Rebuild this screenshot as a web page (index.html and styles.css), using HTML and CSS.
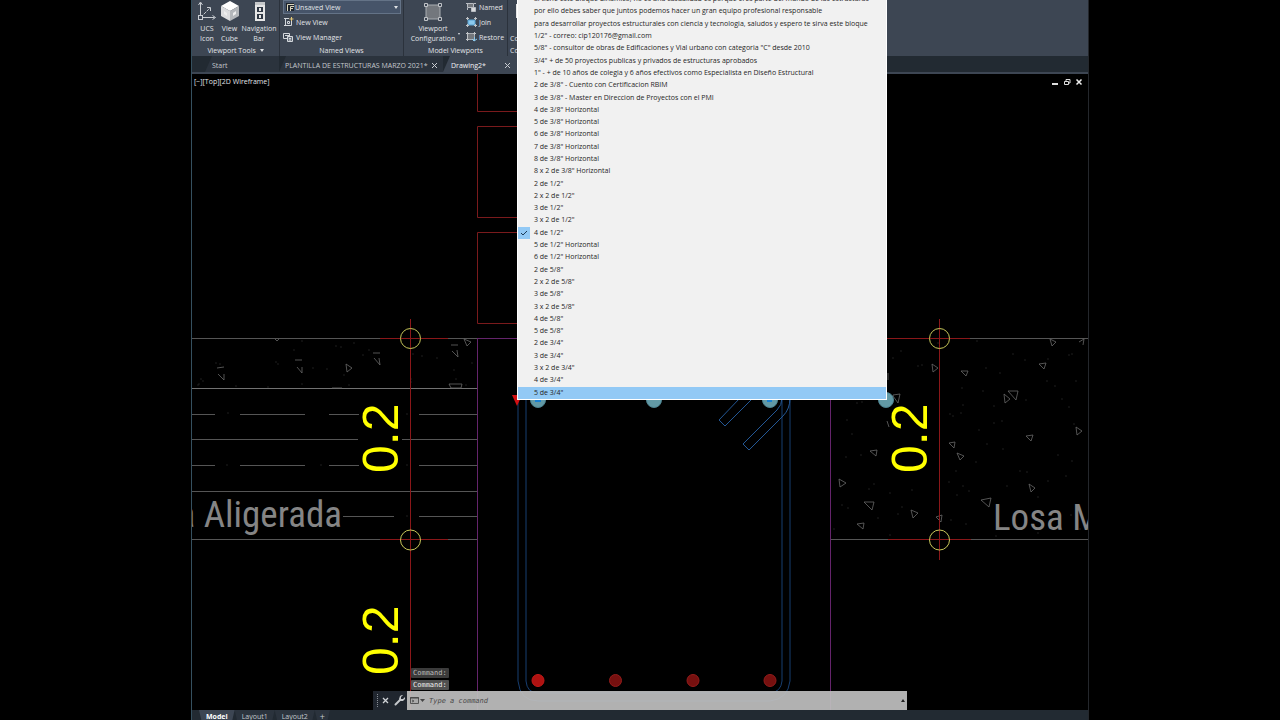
FILE: index.html
```html
<!DOCTYPE html>
<html lang="es">
<head>
<meta charset="utf-8">
<title>Drawing2</title>
<link rel="stylesheet" href="styles.css">
</head>
<body>
<div class="app">
  <header class="ribbon">
    <section class="panel panel-tools">
      <div class="panel-body big-tools">
        <button class="big"><svg width="20" height="22" viewBox="0 0 20 22" fill="none" stroke="#c9cdd2"><path d="M3.500 3v14.500h14"/><path d="M4 17L13 8" stroke-dasharray="3 1"/><path d="M1.500 5l2-3 2 3M15.500 15.500l3 2-3 2M10 7.500h3.500V11"/><rect x="1.500" y="15.500" width="4" height="4" fill="#3c4553"/></svg><span>UCS<br>Icon</span></button>
        <button class="big"><svg width="20" height="22" viewBox="0 0 20 22"><path d="M10 1l9 5-9 5-9-5z" fill="#fff"/><path d="M1 6l9 5v10l-9-5z" fill="#dcdddf"/><path d="M19 6l-9 5v10l9-5z" fill="#b4b7bb"/><path d="M4 11v3l3 2v-3zM13 13v3l3-2v-3z" fill="#eee"/></svg><span>View<br>Cube</span></button>
        <button class="big"><svg width="20" height="22" viewBox="0 0 20 22"><path d="M6 2h10v19H6z" fill="#e6e6e6"/><path d="M8 7h6v5H8zM8 14h6v5H8z" fill="#303844"/><path d="M10 8h2v3h-2zM10 15h2v3h-2z" fill="#e6e6e6"/><path d="M6 2h10v3H6z" fill="#c6c8ca"/></svg><span>Navigation<br>Bar</span></button>
      </div>
      <h2>Viewport Tools <i class="caret"></i></h2>
    </section>
    <section class="panel panel-views">
      <div class="panel-body rows">
        <label class="combo"><svg width="8" height="8" viewBox="0 0 8 8"><path d="M0 0h8v8H0z" fill="#1e242c"/><path d="M1.500 8V1.500H8M4.500 8V3.500H8M4.500 5.500H7" stroke="#dcd6bd" fill="none"/></svg><select aria-label="Named view"><option>Unsaved View</option></select><i class="caret"></i></label>
        <button class="row"><svg width="11" height="10" viewBox="0 0 11 10" fill="none" stroke="#d3d7dc"><path d="M2.500 1v7.500h6V4M1 1.500h5M4.500 4.500h2v2h-2zM1 8.500h2"/><path d="M8.500 0v4M6.500 2h4" stroke="#e5c877"/></svg>New View</button>
        <button class="row"><svg width="11" height="10" viewBox="0 0 11 10" fill="none" stroke="#d3d7dc"><path d="M.500 1.500h6v5h-6z"/><path d="M4.500 4.500h5v5h-5z" fill="#69717c"/><path d="M2 3.500h5M6 6.500h2M6 8h2"/></svg>View Manager</button>
      </div>
      <h2>Named Views</h2>
    </section>
    <section class="panel panel-model">
      <div class="panel-body model">
        <button class="big"><svg width="20" height="22" viewBox="0 0 20 22"><path d="M3 5h14v14H3z" fill="#73777d" stroke="#a9adb2"/><g fill="#3c4553" stroke="#c0c3c7"><path d="M1.500 3.500h3v3h-3zM15.500 3.500h3v3h-3zM1.500 17.500h3v3h-3zM15.500 17.500h3v3h-3z"/></g></svg><span>Viewport<br>Configuration</span></button>
        <i class="caret"></i>
        <div class="rows">
          <button class="row"><svg width="11" height="10" viewBox="0 0 11 10" fill="none" stroke="#b9bdc3"><path d="M1.500 1.500h6v4h-6z" fill="#73777d"/><path d="M5.500 5.500h4v4h-4z" fill="#d9dbde"/><path d="M0 1.500h2M8 1.500h2M1.500 6v2"/></svg>Named</button>
          <button class="row"><svg width="11" height="10" viewBox="0 0 11 10" fill="none"><path d="M2 3h7v5H2z" fill="#8bc9ee" stroke="#59a0cf"/><path d="M1.500 0v3M9.500 0v3M1.500 7v3M9.500 7v3M0 1.500h3M8 1.500h3M0 8.500h3M8 8.500h3" stroke="#c0c3c7"/></svg>Join</button>
          <button class="row"><svg width="11" height="10" viewBox="0 0 11 10" fill="none"><path d="M1.500 1.500h7v6h-7z" fill="#73777d" stroke="#a9adb2"/><path d="M0 1.500h3M7 1.500h3M0 7.500h3M1.500 0v9M8.500 0v3" stroke="#c0c3c7"/><path d="M6 7l2 2 3-2M8.500 9V5" stroke="#8bc9ee"/></svg>Restore</button>
        </div>
      </div>
      <h2>Model Viewports</h2>
    </section>
    <section class="panel panel-config">
      <div class="panel-body"><button class="big"><svg width="20" height="22" viewBox="0 0 20 22"><path d="M6 4h12v14H6z" fill="#e6e6e6"/></svg><span>&nbsp;<br>Config</span></button></div>
      <h2>Config</h2>
    </section>
  </header>

  <nav class="tabs" aria-label="Drawings">
    <button class="tab tab-start">Start</button>
    <button class="tab tab-file">PLANTILLA DE ESTRUCTURAS MARZO 2021* <svg width="7" height="7" viewBox="0 0 7 7"><path d="M1 1l5 5M6 1L1 6" stroke="#c9cdd2" fill="none"/></svg></button>
    <button class="tab tab-current">Drawing2* <svg width="7" height="7" viewBox="0 0 7 7"><path d="M1 1l5 5M6 1L1 6" stroke="#c9cdd2" fill="none"/></svg></button>
  </nav>

  <main class="canvas">
    <svg class="drawing" viewBox="192 74 896 636" preserveAspectRatio="xMinYMin slice" fill="none">
      <g stroke="#7a1a1c"><path d="M477.500 74v37.500h60M537.500 126.500h-60v91h60M537.500 232.500h-60v91h60"/></g>
      <g stroke="#555"><path d="M192 338.500h286M830 338.500h258M192 491.500h286M192 539.500h286M830 539.500h258"/><path d="M192 388.500h286" stroke="#727272"/><path d="M192 414.500h23M240 414.500h65M329 414.500h30M419 414.500h58M192 439.500h166M402 439.500h75M192 465.500h23M240 465.500h65M329 465.500h30M419 465.500h58M343 516.500h51M419 516.500h58"/></g>
      <g stroke="#686868" stroke-width="0.800">
        <path d="M217 368l7-1M218 374l6 6v-6M295 360h7M297 367l5 6v-6M346 364l6 4-5 4zM373 353h7M374 358l6 7-1-7M451 345h7M452 351l6 6-1-7M464 339l7 3-4 4zM449 384h13l-1 4h-10zM332 388h10M275 339l2 2 2-2"/>
        <path d="M932 364l6 4-5 4zM961 371h7l-2 5zM1050 339l6 3-4 4zM1039 364l7-1-2 6zM1004 394l6 5-5 4zM1008 391h10l-2 9zM893 395l7-1-2 9-5-7zM1026 436l7-1-2 6zM1076 427l6 4-5 4zM949 443l6-1-1 6zM957 453l7 3-4 4zM870 451l7-1-1 6zM839 479l7 4-6 4zM864 502h10l-2 8zM911 510l7 3-5 5zM857 524l7-1-1 6zM936 517l6-2-1 7zM981 500l10-2-2 9zM1029 484l6 4-4 4zM888 380v-7M887 421l2 6M1079 342l5-3-1 6"/>
      </g>
      <g stroke="#606060" stroke-linecap="round" stroke-width="0.800">
        <path d="M201 379h0M199 384h0M203 381h0M198 385h0M216 363h0M220 364h0M236 386h0M276 362h0M278 364h0M268 387h0M294 350h0M302 341h0M302 384h0M313 368h0M327 369h0M336 346h0M341 347h0M344 375h0M354 343h0M363 355h0M369 350h0M411 379h0M411 382h0M413 354h0M422 356h0M437 358h0M454 370h0M456 379h0M466 385h0M472 363h0M228 413h0M227 465h0M321 465h0M407 414h0M407 465h0M407 516h0M349 385h0"/>
        <path d="M893 358h0M901 351h0M918 366h0M922 365h0M938 343h0M977 341h0M986 368h0M1000 373h0M1013 354h0M1025 360h0M1048 359h0M1069 355h0M1072 354h0M962 388h0M963 405h0M953 416h0M994 423h0M1002 421h0M1026 400h0M1047 381h0M1055 386h0M1076 381h0M1062 399h0M1069 407h0M1074 424h0M994 406h0M987 444h0M1003 449h0M1072 461h0M1066 476h0M950 414h0M961 413h0M857 403h0M862 402h0M847 420h0M852 434h0M846 457h0M861 455h0M895 452h0M869 489h0M874 484h0M890 493h0M902 507h0M898 514h0M842 505h0M848 508h0M834 529h0M878 518h0M912 490h0M949 482h0M957 495h0M963 486h0M969 491h0M951 520h0M966 524h0M890 535h0M1027 472h0M1038 497h0M1071 515h0M1080 529h0M1038 533h0M1007 486h0M1020 471h0M1058 455h0M1048 481h0M996 536h0M979 430h0M976 462h0M956 471h0M983 391h0"/>
      </g>
      <path d="M477.500 338v372M830.500 338v372M477 338.500h353" stroke="#64246b"/>
      <g stroke="#8a1719"><path d="M410.500 319v391M939.500 319v241"/><path d="M380 338.500h68M380 539.500h68M887 338.500h83M888 539.500h83"/></g>
      <g stroke="#c7c759"><circle cx="410.500" cy="338.500" r="10"/><circle cx="410.500" cy="540" r="10"/><circle cx="939.500" cy="338.500" r="10"/><circle cx="939.500" cy="540" r="10"/></g>
      <g stroke="#173e70"><path d="M518 395v286q2 20 20 20h232q18-2 20-20V395"/><path d="M526 395v286q1 12 12 12h232q11-1 12-12V395"/><path d="M740 398l-21 22 6 6 28-28M782 398q0 7-5 12l-34 34 6 6 34-34q7-7 7-18" stroke="#235795"/></g>
      <path d="M512 395h10l-5 11z" fill="#d10f12"/>
      <g fill="#6299a5" stroke="#4c828f"><circle cx="538" cy="400" r="7.500"/><circle cx="654" cy="400" r="7.500"/><circle cx="770" cy="400" r="7.500"/><circle cx="886" cy="400" r="7.500"/></g>
      <path d="M535 401h6M767 401h5" stroke="#167ed1" stroke-width="2"/>
      <g fill="#76100f" stroke="#941c1b"><circle cx="538" cy="680.500" r="6" fill="#af1211" stroke="#c41a18"/><circle cx="615.500" cy="680.500" r="6"/><circle cx="693" cy="680.500" r="6"/><circle cx="770" cy="680.500" r="6"/></g>
      <g class="dimension"><text transform="translate(398 473) rotate(-90)">0.2</text><text transform="translate(398 675) rotate(-90)">0.2</text><text transform="translate(927 473) rotate(-90)">0.2</text></g>
      <g class="slab"><text x="342" y="527" text-anchor="end">Losa Aligerada</text><text x="993" y="530">Losa Maciza</text></g>
    </svg>
    <div class="view-label">[−][Top][2D Wireframe]</div>
    <div class="window-controls">
      <button aria-label="Minimize"><svg width="8" height="8" viewBox="0 0 8 8"><path d="M1 6h6" stroke="#ddd" stroke-width="2"/></svg></button>
      <button aria-label="Restore"><svg width="8" height="8" viewBox="0 0 8 8" fill="none" stroke="#ddd"><path d="M3 3V1.500h4V5H6M1.500 3.500h4v3h-4z"/></svg></button>
      <button aria-label="Close"><svg width="8" height="8" viewBox="0 0 8 8"><path d="M1.500 1.500l5 5M6.500 1.500l-5 5" stroke="#eee" stroke-width="1.500"/></svg></button>
    </div>
    <div class="command">
      <div class="history"><span>Command:</span><span>Command:</span></div>
      <div class="command-bar">
        <div class="command-tools">
          <svg width="3" height="14" viewBox="0 0 3 14"><path d="M1.500 0v14" stroke="#8b9097" stroke-dasharray="1 1"/></svg>
          <button aria-label="Close"><svg width="7" height="7" viewBox="0 0 7 7"><path d="M1 1l5 5M6 1L1 6" stroke="#d0d3d7" stroke-width="1.300"/></svg></button>
          <button aria-label="Customize"><svg width="11" height="11" viewBox="0 0 11 11"><path d="M1.500 9.500L6 5" stroke="#c5c8cc" stroke-width="2" stroke-linecap="round"/><path d="M9 0L7 2v2h2l2-2v2L9 6H6L5 4l1-3 2-1z" fill="#c5c8cc"/></svg></button>
        </div>
        <label class="prompt">
          <svg width="16" height="9" viewBox="0 0 16 9"><path d="M1.500 1.500h8v6h-8z" fill="#aaa" stroke="#555"/><path d="M1 2h9" stroke="#444"/><path d="M3 4l2 1-2 1" fill="none" stroke="#555"/><path d="M11 3h5l-2.500 3z" fill="#444"/></svg>
          <input type="text" placeholder="Type a command" aria-label="Command">
          <i class="caret caret-up"></i>
        </label>
      </div>
    </div>
  </main>

  <footer class="status">
    <button class="layout layout-current">Model</button><button class="layout">Layout1</button><button class="layout">Layout2</button><button class="layout layout-add">+</button>
  </footer>

  <div class="menu" role="menu">
    <button role="menuitem">Si tiene este bloque dinamico, no es una casualidad es porque eres parte del mundo de las estructuras</button>
    <button role="menuitem">por ello debes saber que juntos podemos hacer un gran equipo profesional responsable</button>
    <button role="menuitem">para desarrollar proyectos estructurales con ciencia y tecnologia, saludos y espero te sirva este bloque</button>
    <button role="menuitem">1/2" - correo: cip120176@gmail.com</button>
    <button role="menuitem">5/8" - consultor de obras de Edificaciones y Vial urbano con categoria "C" desde 2010</button>
    <button role="menuitem">3/4" + de 50 proyectos publicas y privados de estructuras aprobados</button>
    <button role="menuitem">1" - + de 10 años de colegia y 6 años efectivos como Especialista en Diseño Estructural</button>
    <button role="menuitem">2 de 3/8" - Cuento con Certificacion RBIM</button>
    <button role="menuitem">3 de 3/8" - Master en Direccion de Proyectos con el PMI</button>
    <button role="menuitem">4 de 3/8" Horizontal</button>
    <button role="menuitem">5 de 3/8" Horizontal</button>
    <button role="menuitem">6 de 3/8" Horizontal</button>
    <button role="menuitem">7 de 3/8" Horizontal</button>
    <button role="menuitem">8 de 3/8" Horizontal</button>
    <button role="menuitem">8 x 2 de 3/8" Horizontal</button>
    <button role="menuitem">2 de 1/2"</button>
    <button role="menuitem">2 x 2 de 1/2"</button>
    <button role="menuitem">3 de 1/2"</button>
    <button role="menuitem">3 x 2 de 1/2"</button>
    <button role="menuitemradio" aria-checked="true"><svg class="check" width="12" height="12" viewBox="0 0 12 12"><path d="M3 6l2 2 4-4" fill="none" stroke="#1c3a57"/></svg>4 de 1/2"</button>
    <button role="menuitem">5 de 1/2" Horizontal</button>
    <button role="menuitem">6 de 1/2" Horizontal</button>
    <button role="menuitem">2 de 5/8"</button>
    <button role="menuitem">2 x 2 de 5/8"</button>
    <button role="menuitem">3 de 5/8"</button>
    <button role="menuitem">3 x 2 de 5/8"</button>
    <button role="menuitem">4 de 5/8"</button>
    <button role="menuitem">5 de 5/8"</button>
    <button role="menuitem">2 de 3/4"</button>
    <button role="menuitem">3 de 3/4"</button>
    <button role="menuitem">3 x 2 de 3/4"</button>
    <button role="menuitem">4 de 3/4"</button>
    <button role="menuitem" class="highlight">5 de 3/4"</button>
  </div>
</div>
</body>
</html>
```

FILE: styles.css
```css
* { box-sizing: border-box; }
body { margin: 0; background: #000; overflow: hidden; font-family: "Open Sans", "Noto Sans", sans-serif; font-size: 7px; color: #e1e4e8; }
button, input, select { font: inherit; color: inherit; background: none; border: 0; padding: 0; margin: 0; }
svg { flex: none; }
.app { position: relative; display: flex; flex-direction: column; width: 70%; height: 100vh; margin: 0 auto; box-shadow: -1px 0 #35505f, 1px 0 #24272c; }

.ribbon { display: flex; flex: none; height: 56px; background: #3d4653; overflow: hidden; }
.panel { display: flex; flex-direction: column; flex: none; border-right: 1px solid #2b323c; }
.panel-body { flex: 1; min-height: 0; }
.panel h2 { height: 10px; margin: 0; font-size: 7px; line-height: 10px; font-weight: 400; text-align: center; }
.panel-tools { width: 88px; }
.panel-views { width: 124px; }
.panel-model { width: 104px; }
.panel-config { flex: 1; border-right: 0; }
.panel-config h2 { text-align: left; padding-left: 2px; }
.panel-config .big { padding-left: 2px; align-items: flex-start; }
.big-tools { display: grid; grid-template-columns: 30px 15px 44px; }
.big { display: flex; flex-direction: column; align-items: center; gap: 2px; line-height: 10px; white-space: nowrap; }
.rows { display: flex; flex-direction: column; gap: 1px; }
.row { display: flex; align-items: center; gap: 2px; height: 14px; white-space: nowrap; }
.panel-views .rows { padding: 0 2px 0 3px; }
.combo { display: flex; align-items: center; gap: 1px; height: 14px; padding: 0 2px 0 2px; border: 1px solid #647387; background: #465469; }
.combo select { flex: 1; appearance: none; outline: 0; }
.caret { display: inline-block; border: 2px solid transparent; border-top: 3px solid #dfe2e6; border-bottom: 0; margin-left: 2px; vertical-align: 1px; }
.model { display: flex; }
.model .big { width: 54px; padding-left: 4px; }
.model .caret { align-self: flex-end; border-width: 2px 1px 0; margin: 0 6px 11px 0; }

.tabs { display: flex; flex: none; height: 18px; padding-left: 13px; background: #222a32; border-bottom: 2px solid #3d4653; }
.tab { display: flex; align-items: center; gap: 3px; height: 16px; padding-top: 2px; white-space: nowrap; color: #c3c7cc; background: #2b333d; clip-path: polygon(7px 0, 100% 0, 100% 100%, 0 100%); }
.tab svg { margin-left: auto; }
.tab-start { width: 74px; padding-left: 7px; }
.tab-file { width: 164px; padding: 2px 5px 0 6px; }
.tab-current { width: 74px; padding: 2px 6px 0 8px; color: #f0f1f3; background: #3d4653; }

.canvas { position: relative; flex: 1; min-height: 0; overflow: hidden; background: #000; }
.drawing { position: absolute; inset: 0; width: 100%; height: 100%; }
.dimension { fill: #ff0; font: 50px "Liberation Sans", Arial, sans-serif; }
.slab { fill: #858585; font: 37px "Liberation Sans Narrow", "Arial Narrow", "Roboto Condensed", "Liberation Sans", sans-serif; }
.view-label { position: absolute; left: 2px; top: 2px; line-height: 11px; }
.window-controls { position: absolute; right: 5px; top: 4px; display: flex; gap: 4px; }
.window-controls button { display: flex; }
.command { position: absolute; bottom: 0; left: 50%; width: 534px; transform: translateX(-50%); font-family: "DejaVu Sans Mono", monospace; }
.history { display: flex; flex-direction: column; align-items: flex-start; gap: 2px; padding: 0 0 1px 38px; }
.history span { padding: 0 2px; line-height: 10px; background: #505050; border-radius: 1px; color: #eee; }
.history span:first-child { background: #3b3b3b; color: #bbb; }
.command-bar { display: flex; height: 19px; }
.command-tools { display: flex; align-items: center; gap: 3px; width: 34px; padding-left: 3px; background: #20262f; }
.command-tools button { display: flex; }
.command-tools button + button { margin-left: 2px; }
.prompt { display: flex; flex: 1; align-items: center; gap: 4px; padding: 0 2px; background: rgba(190, 190, 190, 0.93); }
.prompt input { flex: 1; outline: 0; font-style: italic; }
.prompt input::placeholder { color: #494949; opacity: 1; }
.caret-up { border: 2px solid transparent; border-bottom: 3px solid #222; border-top: 0; }

.status { display: flex; flex: none; height: 10px; padding-left: 7px; background: #222a32; overflow: hidden; }
.layout { height: 13px; padding: 0 7px; line-height: 13px; background: #2b333d; color: #c3c7cc; clip-path: polygon(0 0, 100% 0, calc(100% - 3px) 100%, 3px 100%); }
.layout-current { background: #3d4653; color: #fff; font-weight: 700; }
.layout-add { padding: 0 5px; font-size: 9px; }

.menu { position: absolute; top: -7px; left: 325px; display: flex; flex-direction: column; width: 370px; height: 407px; background: #f1f1f1; border: 1px solid #fff; border-top: 0; color: #262626; }
.menu button { position: relative; display: flex; flex: 1; align-items: center; min-height: 0; padding-left: 16px; line-height: 12px; white-space: nowrap; text-align: left; }
.menu .highlight { background: #92c9f5; }
.check { position: absolute; left: 0; top: 0; background: #92c9f5; }
```
